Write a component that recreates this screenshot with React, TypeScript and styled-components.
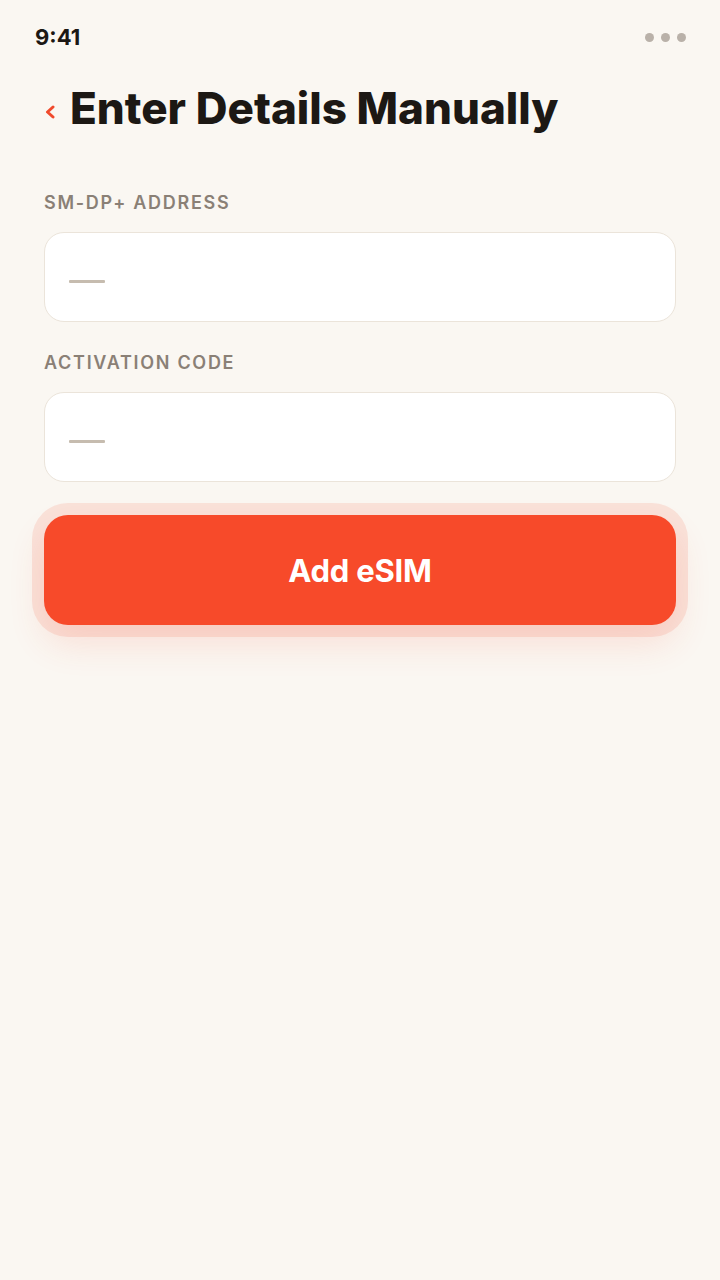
import React from "react";
import styled, { createGlobalStyle } from "styled-components";

const GlobalStyle = createGlobalStyle`
  html, body {
    margin: 0;
    padding: 0;
    background: #faf7f2;
  }
  body {
    font-family: Inter, "Noto Sans", sans-serif;
    -webkit-font-smoothing: antialiased;
  }
`;

const Screen = styled.div`
  min-height: 1280px;
  width: 720px;
  background: #faf7f2;
  display: flex;
  flex-direction: column;
`;

const StatusBar = styled.div`
  height: 74px;
  padding: 0 34px 0 35px;
  display: flex;
  align-items: center;
  justify-content: space-between;
  box-sizing: border-box;
`;

const Time = styled.span`
  font-size: 22px;
  font-weight: 700;
  color: #1c1814;
`;

const Dots = styled.div`
  display: flex;
  gap: 7px;
`;

const Dot = styled.span`
  width: 9px;
  height: 9px;
  border-radius: 50%;
  background: #b9b1a9;
`;

const Header = styled.div`
  display: flex;
  align-items: center;
  gap: 14px;
  padding: 0 44px;
  height: 68px;
`;

const BackButton = styled.button`
  border: none;
  background: none;
  padding: 0;
  margin-top: 8px;
  display: flex;
  align-items: center;
  cursor: pointer;
`;

const Title = styled.h1`
  margin: 0;
  font-size: 44px;
  font-weight: 800;
  color: #1c1814;
  letter-spacing: 0;
`;

const Form = styled.div`
  padding: 49px 44px 0;
  display: flex;
  flex-direction: column;
`;

const Label = styled.label`
  font-size: 18px;
  font-weight: 600;
  color: #8a8076;
  letter-spacing: 1.7px;
  margin-bottom: 17px;
  line-height: 24px;
`;

const Field = styled.div<{ $last?: boolean }>`
  height: 90px;
  box-sizing: border-box;
  background: #ffffff;
  border: 1.5px solid #ebe4da;
  border-radius: 20px;
  display: flex;
  align-items: center;
  padding: 0 24px;
  margin-bottom: ${(p) => (p.$last ? "33px" : "29px")};
`;

const Placeholder = styled.span`
  display: block;
  width: 36px;
  height: 3px;
  border-radius: 1px;
  background: #c6bcaf;
  margin-top: 9px;
`;

const PrimaryButton = styled.button`
  height: 110px;
  width: 100%;
  border: none;
  border-radius: 24px;
  background: #f74a2a;
  color: #ffffff;
  font-family: Inter, "Noto Sans", sans-serif;
  font-size: 31px;
  font-weight: 700;
  letter-spacing: -0.2px;
  cursor: pointer;
  box-shadow: 0 0 0 12px rgba(247, 74, 42, 0.12),
    0 18px 36px rgba(247, 74, 42, 0.14);
`;

const Chevron = () => (
  <svg width="12" height="14" viewBox="0 0 12 14">
    <path
      d="M9 2 L3.5 7 L9 12"
      fill="none"
      stroke="#f04a2c"
      strokeWidth="3"
      strokeLinecap="round"
      strokeLinejoin="round"
    />
  </svg>
);

export default function App() {
  return (
    <>
      <GlobalStyle />
      <Screen>
        <StatusBar>
          <Time>9:41</Time>
          <Dots>
            <Dot />
            <Dot />
            <Dot />
          </Dots>
        </StatusBar>
        <Header>
          <BackButton aria-label="Back">
            <Chevron />
          </BackButton>
          <Title>Enter Details Manually</Title>
        </Header>
        <Form>
          <Label>SM-DP+ ADDRESS</Label>
          <Field>
            <Placeholder />
          </Field>
          <Label>ACTIVATION CODE</Label>
          <Field $last>
            <Placeholder />
          </Field>
          <PrimaryButton>Add eSIM</PrimaryButton>
        </Form>
      </Screen>
    </>
  );
}
